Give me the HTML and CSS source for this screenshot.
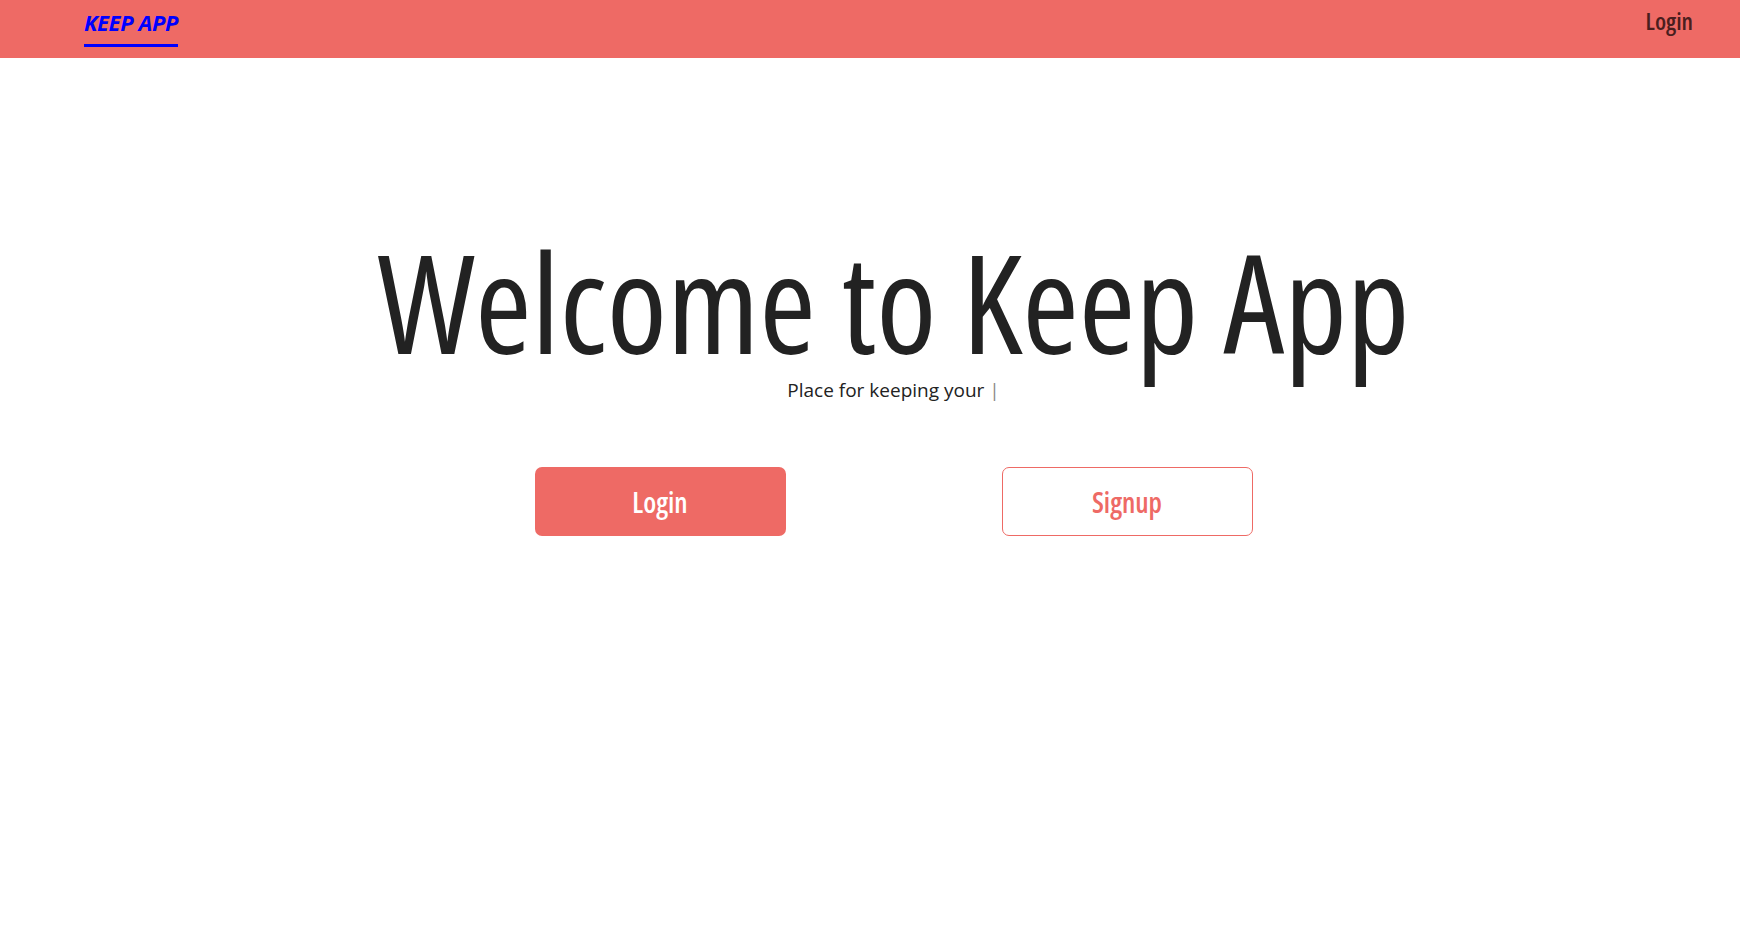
FILE: index.html
```html
<!DOCTYPE html>
<html lang="en">
<head>
<meta charset="utf-8">
<title>Keep App</title>
<link rel="stylesheet" href="styles.css">
</head>
<body>
<nav class="navbar">
  <a class="brand" href="#">KEEP APP</a>
  <a class="nav-link" href="#">Login</a>
</nav>
<main class="hero">
  <h1 class="title">Welcome to Keep App</h1>
  <p class="subtitle">Place for keeping your <span class="cursor">|</span></p>
  <div class="actions">
    <div class="col"><a class="btn btn-fill" href="#">Login</a></div>
    <div class="col"><a class="btn btn-outline" href="#">Signup</a></div>
  </div>
</main>
</body>
</html>
```
FILE: styles.css
```css
html, body {
  margin: 0;
  padding: 0;
  background: #ffffff;
}
body {
  font-family: "Open Sans", "Roboto Condensed", sans-serif;
  font-stretch: 75%;
}
a { text-decoration: none; }

.navbar {
  height: 58px;
  background: #ee6a65;
  display: flex;
  align-items: flex-start;
  justify-content: space-between;
  padding: 0 47px 0 84px;
  box-sizing: border-box;
}
.brand {
  display: inline-block;
  margin-top: 8px;
  color: #0000ff;
  font-style: italic;
  font-weight: 700;
  font-stretch: 100%;
  font-size: 22px;
  line-height: 28px;
  letter-spacing: -0.4px;
  padding-bottom: 8px;
  border-bottom: 3px solid #0000ff;
}
.nav-link {
  display: inline-block;
  margin-top: 7px;
  color: #4a1e1e;
  font-size: 24px;
  line-height: 28px;
  font-weight: 600;
}

.hero {
  padding: 175px 0 0 47px;
  display: flex;
  flex-direction: column;
  align-items: center;
}
.title {
  margin: 0;
  font-size: 137px;
  line-height: 137px;
  font-weight: 500;
  color: #222222;
  white-space: nowrap;
}
.subtitle {
  margin: 8px 0 0;
  font-family: "Open Sans", "Noto Sans", sans-serif;
  font-stretch: 100%;
  font-size: 19px;
  line-height: 24px;
  color: #222222;
}
.cursor { color: #888888; }

.actions {
  margin-top: 65px;
  display: grid;
  grid-template-columns: 467px 467px;
}
.col {
  display: flex;
  justify-content: center;
}
.btn {
  width: 251px;
  height: 69px;
  box-sizing: border-box;
  border-radius: 7px;
  display: flex;
  align-items: center;
  justify-content: center;
  font-size: 28px;
  font-weight: 600;
}
.btn-fill {
  background: #ee6a65;
  color: #ffffff;
}
.btn-outline {
  background: #ffffff;
  border: 1px solid #ee6a65;
  color: #ee6a65;
}
```
